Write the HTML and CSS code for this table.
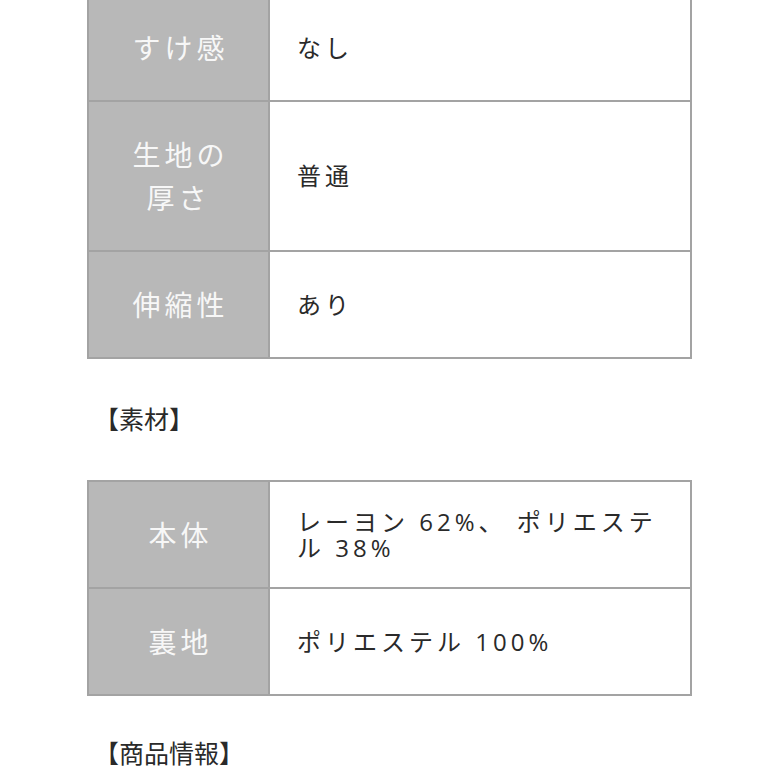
FILE: index.html
```html
<!DOCTYPE html>
<html lang="ja">
<head>
<meta charset="utf-8">
<link rel="stylesheet" href="styles.css">
</head>
<body>
<div class="page">
  <table class="spec spec-first">
    <tr>
      <td class="label">すけ感</td>
      <td class="value">なし</td>
    </tr>
    <tr>
      <td class="label">生地の<br>厚さ</td>
      <td class="value">普通</td>
    </tr>
    <tr>
      <td class="label">伸縮性</td>
      <td class="value">あり</td>
    </tr>
  </table>

  <h2 class="heading heading-material">【素材】</h2>

  <table class="spec">
    <tr>
      <td class="label">本体</td>
      <td class="value">レーヨン 62%、 ポリエステル 38%</td>
    </tr>
    <tr>
      <td class="label">裏地</td>
      <td class="value">ポリエステル 100%</td>
    </tr>
  </table>

  <h2 class="heading heading-info">【商品情報】</h2>
</div>
</body>
</html>
```

FILE: styles.css
```css
html, body {
  margin: 0;
  padding: 0;
  background: #ffffff;
}

body {
  font-family: "Noto Sans CJK JP", "Noto Sans", sans-serif;
  color: #333333;
  overflow: hidden;
}

.page {
  padding: 0 87px;
  width: 605px;
}

.spec {
  width: 605px;
  border-collapse: collapse;
  table-layout: fixed;
}

.spec-first {
  margin-top: -7px;
}

.spec td {
  border: 2px solid #a3a3a3;
}

.label {
  width: 179px;
  background: #b8b8b8;
  color: #f7f7f7;
  font-size: 28px;
  line-height: 43px;
  letter-spacing: 4px;
  text-indent: 4px;
  text-align: center;
  padding: 31px 0;
  vertical-align: middle;
}

.value {
  background: #ffffff;
  color: #2a2a2a;
  font-family: "Open Sans", "Noto Sans CJK JP", sans-serif;
  font-size: 24px;
  line-height: 26px;
  letter-spacing: 4px;
  padding: 0 15px 0 27px;
  vertical-align: middle;
}

.heading {
  margin: 0;
  padding-left: 7px;
  font-size: 25px;
  font-weight: normal;
  line-height: 30px;
  color: #2a2a2a;
}

.heading-material {
  margin-top: 44px;
  margin-bottom: 47px;
}

.heading-info {
  margin-top: 41px;
}
```
